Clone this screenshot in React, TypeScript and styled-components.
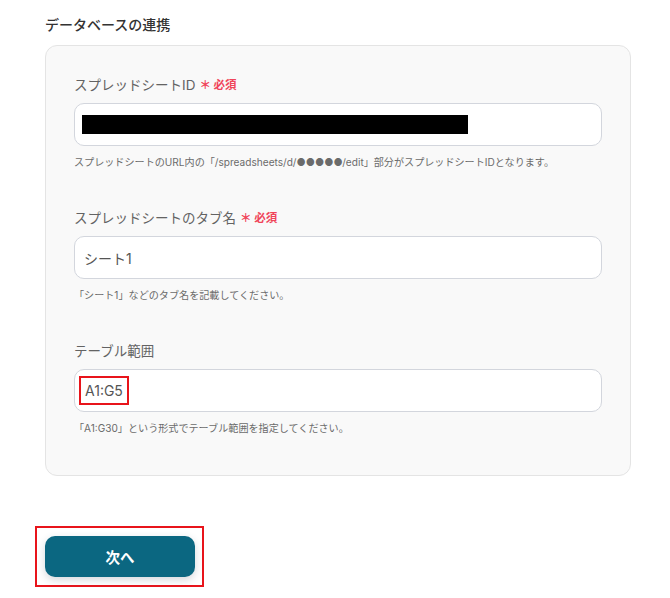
import React from 'react';
import styled, { createGlobalStyle } from 'styled-components';

const GlobalStyle = createGlobalStyle`
  html, body {
    margin: 0;
    padding: 0;
    background: #ffffff;
  }
  body {
    font-family: "Inter", "Noto Sans CJK JP", "Noto Sans", sans-serif;
    -webkit-font-smoothing: antialiased;
  }
`;

interface IField {
  label: string;
  required?: boolean;
  value?: string;
  redacted?: boolean;
  highlighted?: boolean;
  help: string;
}

const fields: IField[] = [
  {
    label: 'スプレッドシートID',
    required: true,
    redacted: true,
    help: 'スプレッドシートのURL内の「/spreadsheets/d/●●●●●/edit」部分がスプレッドシートIDとなります。',
  },
  {
    label: 'スプレッドシートのタブ名',
    required: true,
    value: 'シート1',
    help: '「シート1」などのタブ名を記載してください。',
  },
  {
    label: 'テーブル範囲',
    value: 'A1:G5',
    highlighted: true,
    help: '「A1:G30」という形式でテーブル範囲を指定してください。',
  },
];

export default function App() {
  return (
    <>
      <GlobalStyle />
      <Page>
        <SectionTitle>データベースの連携</SectionTitle>
        <Card>
          {fields.map((field) => (
            <Field key={field.label}>
              <Label>
                {field.label}
                {field.required && <Required>＊ 必須</Required>}
              </Label>
              <InputBox>
                {field.redacted && <Redacted />}
                {field.value &&
                  (field.highlighted ? (
                    <Marked>{field.value}</Marked>
                  ) : (
                    <InputText>{field.value}</InputText>
                  ))}
              </InputBox>
              <Help>{field.help}</Help>
            </Field>
          ))}
        </Card>
        <ButtonFrame>
          <NextButton type="button">次へ</NextButton>
        </ButtonFrame>
      </Page>
    </>
  );
}

const Page = styled.div`
  width: 670px;
  height: 598px;
  box-sizing: border-box;
  padding: 15px 40px 0 45px;
  display: flex;
  flex-direction: column;
  align-items: flex-start;
`;
const SectionTitle = styled.h2`
  margin: 0;
  font-size: 14px;
  line-height: 20px;
  font-weight: 500;
  color: #333333;
`;
const Card = styled.div`
  margin-top: 10px;
  width: 586px;
  box-sizing: border-box;
  padding: 29px 28px 39px;
  background: #f9f9f9;
  border: 1px solid #e4e4e4;
  border-radius: 12px;
  display: flex;
  flex-direction: column;
  gap: 38px;
`;
const Field = styled.div`
  display: flex;
  flex-direction: column;
`;
const Label = styled.div`
  display: flex;
  align-items: center;
  font-size: 13.5px;
  line-height: 20px;
  font-weight: 400;
  color: #636363;
`;
const Required = styled.span`
  margin-left: 4px;
  font-size: 11.5px;
  font-weight: 700;
  color: #f0455a;
`;
const InputBox = styled.div`
  margin-top: 8px;
  height: 43px;
  box-sizing: border-box;
  padding: 0 4px;
  background: #ffffff;
  border: 1px solid #d3d6dd;
  border-radius: 10px;
  display: flex;
  align-items: center;
`;
const Redacted = styled.div`
  margin-left: 3px;
  width: 386px;
  height: 19px;
  background: #000000;
`;
const InputText = styled.span`
  padding-left: 5px;
  font-size: 14px;
  color: #555555;
`;
const Marked = styled.span`
  display: flex;
  align-items: center;
  box-sizing: border-box;
  width: 50px;
  height: 29px;
  padding-left: 4px;
  border: 2px solid #e8141b;
  font-size: 14px;
  color: #555555;
`;
const Help = styled.div`
  margin-top: 8px;
  font-size: 10.1px;
  line-height: 16px;
  color: #6b6b6b;
`;
const ButtonFrame = styled.div`
  margin-top: 50px;
  margin-left: -10px;
  padding: 8px 7px 8px 8px;
  border: 2px solid #e8141b;
`;
const NextButton = styled.button`
  display: block;
  width: 150px;
  height: 41px;
  border: none;
  border-radius: 10px;
  background: #0b6781;
  color: #ffffff;
  font-family: inherit;
  font-size: 14.5px;
  font-weight: 700;
  box-shadow: 0 3px 8px rgba(40, 60, 80, 0.2);
  cursor: pointer;
`;
